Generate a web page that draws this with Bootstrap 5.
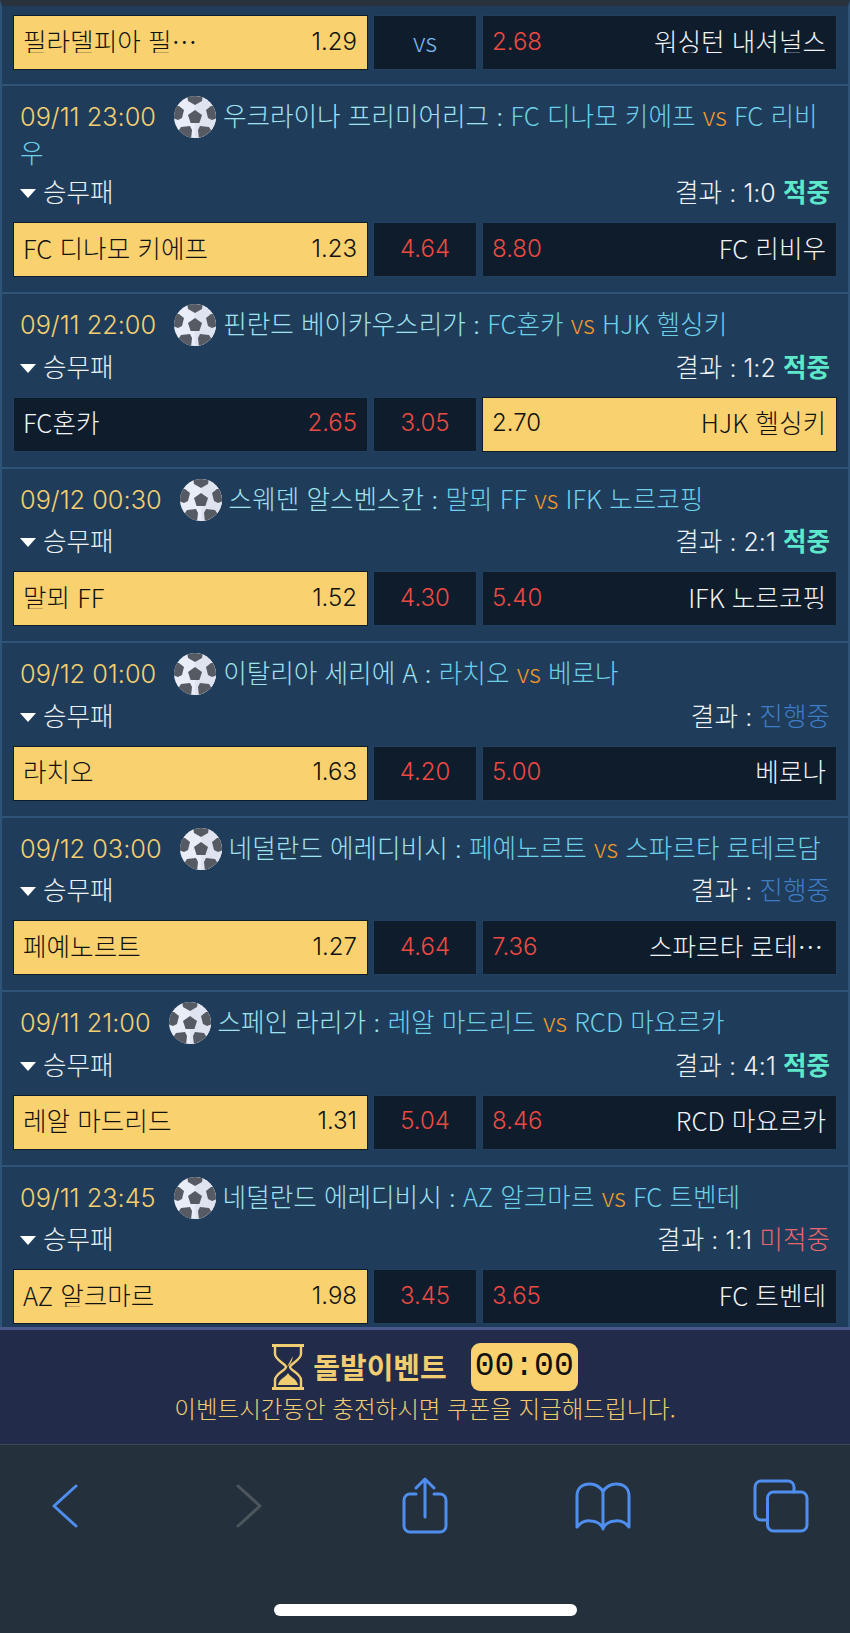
<!DOCTYPE html>
<html lang="ko">
<head>
    <meta charset="UTF-8">
    <meta name="viewport" content="width=device-width, initial-scale=1.0">
    <title>경기 결과</title>
    <link href="https://cdn.jsdelivr.net/npm/bootstrap@5.3.3/dist/css/bootstrap.min.css" rel="stylesheet">
    <style>
        html, body { height: 100%; }
        body {
            background: #24303c;
            font-family: "Noto Sans CJK KR", "Noto Sans", sans-serif;
            font-weight: 300;
            font-size: 25.6px;
            color: #eef2f5;
            overflow: hidden;
        }
        .screen { height: 1633px; }
        .game-list {
            min-height: 0;
            overflow: hidden;
            background: #1f3d5b;
            border-top: 6px solid #29323d;
            border-left: 2px solid #2f5478;
            border-right: 2px solid #2f5478;
        }
        .game { padding: 12px 11px 15px; border-bottom: 2px solid #2f5478; }
        .game-first { padding-top: 9px; padding-bottom: 14px; }
        .game-title { line-height: 33.5px; padding-left: 7px; padding-right: 5px; word-break: break-all; color: #6dd0e8; }
        .game-time { font-family: Inter, sans-serif; font-size: 25.3px; color: #f4cf70; margin-right: 18px; }
        .ball { width: 42px; height: 42px; vertical-align: middle; margin: -8px 7px -4px 0; }
        .league { color: #a0e2ee; }
        .vs-text { color: #f0982a; }
        .latin { font-family: Inter, sans-serif; font-size: 25px; }
        .game-sub { height: 34px; margin: 6px 7px 14px; line-height: 34px; }
        .tri { display: inline-block; border: 8px solid transparent; border-top: 9px solid #fff; border-bottom: 0; margin-right: 7px; vertical-align: 4px; }
        .odds-row { display: flex; gap: 5px; height: 55px; line-height: 1; }
        .pick {
            display: flex; align-items: center; justify-content: space-between;
            padding: 0 10px 4px 9px;
            background: #0e1c2c; border: 1px solid #21405f; min-width: 0; color: #f1f4f6;
        }
        .pick-side { flex: 1 1 0; }
        .pick-mid { flex: 0 0 104px; justify-content: center; padding-left: 0; padding-right: 0; }
        .pick.sel { background: #f9d26f; border-color: #0e1c2c; color: #111; }
        .odd { font-family: Inter, sans-serif; font-size: 24px; padding-top: 2px; }
        .red { color: #ec4a42; }
        .blue { color: #7ab8ee; }
        .team { max-width: 190px; overflow: hidden; white-space: nowrap; text-overflow: ellipsis; }
        .team-short { max-width: 177px; }
        .hit { color: #5ee8cb; font-weight: 700; }
        .ongoing { color: #3f7cc6; }
        .miss { color: #e9656d; }
        .event-bar { height: 117px; background: #232b4a; border-top: 3px solid #4a5a8c; color: #f1cd72; text-align: center; }
        .event-head { height: 48px; margin-top: 13px; gap: 9px; }
        .event-title { font-size: 29px; font-weight: 700; margin-right: 15px; }
        .clock { width: 107px; height: 48px; line-height: 48px; border-radius: 9px; background: #f9d26f; color: #111; font-family: "Liberation Mono", monospace; font-size: 33px; }
        .event-sub { font-size: 23.5px; line-height: 34px; }
        .toolbar { height: 189px; background: #24303c; border-top: 1px solid #3a4754; padding-top: 32px; }
        .tool-row { padding-left: 35px; height: 58px; gap: 118px; }
        .tool-row svg { width: 60px; height: 58px; fill: none; stroke: #4f8eee; stroke-width: 3; stroke-linecap: round; stroke-linejoin: round; }
        .tool-row svg.off { stroke: #4d555d; margin-left: 6px; }
        .tool-row svg.share { margin-left: -2px; }
        .home-bar { width: 303px; height: 12px; border-radius: 6px; background: #fff; margin: 69px auto 0; }
    </style>
</head>
<body>
    <svg width="0" height="0" class="position-absolute">
        <symbol id="ball" viewBox="0 0 42 42">
            <clipPath id="ball-clip"><circle cx="21" cy="21" r="21"/></clipPath>
            <circle cx="21" cy="21" r="21" fill="#e9edf7"/>
            <path d="M21 0a21 21 0 0 1 0 42z" fill="#dfe3f0"/>
            <g fill="#565a62" clip-path="url(#ball-clip)">
                <path d="M21 14l7 5-2.6 8h-8.8L14 19z"/>
                <path d="M13 -1h16l-1 6-7 4-7-4z"/>
                <path d="M-1 10h6l5 4-2 8-4 2-5-2z"/>
                <path d="M43 10h-6l-5 4 2 8 4 2 5-2z"/>
                <path d="M7 31l9-1 2 4-1 9H8l-5-6z"/>
                <path d="M35 31l-9-1-2 4 1 9h9l5-6z"/>
            </g>
        </symbol>
    </svg>
    <div class="screen d-flex flex-column">
        <div class="game-list flex-grow-1">
            <div class="game game-first">
                <div class="odds-row">
                    <div class="pick pick-side sel"><span class="team">필라델피아 필리스</span><span class="odd">1.29</span></div>
                    <div class="pick pick-mid blue">vs</div>
                    <div class="pick pick-side"><span class="odd red">2.68</span><span class="team">워싱턴 내셔널스</span></div>
                </div>
            </div>
            <div class="game">
                <div class="game-title"><span class="game-time">09/11 23:00</span><svg class="ball"><use href="#ball"/></svg><span class="league">우크라이나 프리미어리그 <span class="latin">:</span> </span>FC 디나모 키에프 <span class="vs-text">vs</span> FC 리비우</div>
                <div class="game-sub d-flex justify-content-between"><span><i class="tri"></i>승무패</span><span>결과 <span class="latin">: 1:0</span> <span class="hit">적중</span></span></div>
                <div class="odds-row">
                    <div class="pick pick-side sel"><span class="team">FC 디나모 키에프</span><span class="odd">1.23</span></div>
                    <div class="pick pick-mid odd red">4.64</div>
                    <div class="pick pick-side"><span class="odd red">8.80</span><span class="team">FC 리비우</span></div>
                </div>
            </div>
            <div class="game">
                <div class="game-title"><span class="game-time">09/11 22:00</span><svg class="ball"><use href="#ball"/></svg><span class="league">핀란드 베이카우스리가 <span class="latin">:</span> </span>FC혼카 <span class="vs-text">vs</span> HJK 헬싱키</div>
                <div class="game-sub d-flex justify-content-between"><span><i class="tri"></i>승무패</span><span>결과 <span class="latin">: 1:2</span> <span class="hit">적중</span></span></div>
                <div class="odds-row">
                    <div class="pick pick-side"><span class="team">FC혼카</span><span class="odd red">2.65</span></div>
                    <div class="pick pick-mid odd red">3.05</div>
                    <div class="pick pick-side sel"><span class="odd">2.70</span><span class="team">HJK 헬싱키</span></div>
                </div>
            </div>
            <div class="game">
                <div class="game-title"><span class="game-time">09/12 00:30</span><svg class="ball"><use href="#ball"/></svg><span class="league">스웨덴 알스벤스칸 <span class="latin">:</span> </span>말뫼 FF <span class="vs-text">vs</span> IFK 노르코핑</div>
                <div class="game-sub d-flex justify-content-between"><span><i class="tri"></i>승무패</span><span>결과 <span class="latin">: 2:1</span> <span class="hit">적중</span></span></div>
                <div class="odds-row">
                    <div class="pick pick-side sel"><span class="team">말뫼 FF</span><span class="odd">1.52</span></div>
                    <div class="pick pick-mid odd red">4.30</div>
                    <div class="pick pick-side"><span class="odd red">5.40</span><span class="team">IFK 노르코핑</span></div>
                </div>
            </div>
            <div class="game">
                <div class="game-title"><span class="game-time">09/12 01:00</span><svg class="ball"><use href="#ball"/></svg><span class="league">이탈리아 세리에 A <span class="latin">:</span> </span>라치오 <span class="vs-text">vs</span> 베로나</div>
                <div class="game-sub d-flex justify-content-between"><span><i class="tri"></i>승무패</span><span>결과 <span class="latin">:</span> <span class="ongoing">진행중</span></span></div>
                <div class="odds-row">
                    <div class="pick pick-side sel"><span class="team">라치오</span><span class="odd">1.63</span></div>
                    <div class="pick pick-mid odd red">4.20</div>
                    <div class="pick pick-side"><span class="odd red">5.00</span><span class="team">베로나</span></div>
                </div>
            </div>
            <div class="game">
                <div class="game-title"><span class="game-time">09/12 03:00</span><svg class="ball"><use href="#ball"/></svg><span class="league">네덜란드 에레디비시 <span class="latin">:</span> </span>페예노르트 <span class="vs-text">vs</span> 스파르타 로테르담</div>
                <div class="game-sub d-flex justify-content-between"><span><i class="tri"></i>승무패</span><span>결과 <span class="latin">:</span> <span class="ongoing">진행중</span></span></div>
                <div class="odds-row">
                    <div class="pick pick-side sel"><span class="team">페예노르트</span><span class="odd">1.27</span></div>
                    <div class="pick pick-mid odd red">4.64</div>
                    <div class="pick pick-side"><span class="odd red">7.36</span><span class="team team-short">스파르타 로테르담</span></div>
                </div>
            </div>
            <div class="game">
                <div class="game-title"><span class="game-time">09/11 21:00</span><svg class="ball"><use href="#ball"/></svg><span class="league">스페인 라리가 <span class="latin">:</span> </span>레알 마드리드 <span class="vs-text">vs</span> RCD 마요르카</div>
                <div class="game-sub d-flex justify-content-between"><span><i class="tri"></i>승무패</span><span>결과 <span class="latin">: 4:1</span> <span class="hit">적중</span></span></div>
                <div class="odds-row">
                    <div class="pick pick-side sel"><span class="team">레알 마드리드</span><span class="odd">1.31</span></div>
                    <div class="pick pick-mid odd red">5.04</div>
                    <div class="pick pick-side"><span class="odd red">8.46</span><span class="team">RCD 마요르카</span></div>
                </div>
            </div>
            <div class="game">
                <div class="game-title"><span class="game-time">09/11 23:45</span><svg class="ball"><use href="#ball"/></svg><span class="league">네덜란드 에레디비시 <span class="latin">:</span> </span>AZ 알크마르 <span class="vs-text">vs</span> FC 트벤테</div>
                <div class="game-sub d-flex justify-content-between"><span><i class="tri"></i>승무패</span><span>결과 <span class="latin">: 1:1</span> <span class="miss">미적중</span></span></div>
                <div class="odds-row">
                    <div class="pick pick-side sel"><span class="team">AZ 알크마르</span><span class="odd">1.98</span></div>
                    <div class="pick pick-mid odd red">3.45</div>
                    <div class="pick pick-side"><span class="odd red">3.65</span><span class="team">FC 트벤테</span></div>
                </div>
            </div>
        </div>
        <div class="event-bar flex-shrink-0">
            <div class="event-head d-flex justify-content-center align-items-center">
                <svg width="32" height="46" viewBox="0 0 32 46" fill="none">
                    <path d="M0 1.5h32M0 44.5h32" stroke="#f1cd72" stroke-width="3"/>
                    <path d="M3 3v7c0 6 11 10 11 13S3 30 3 36v7M29 3v7c0 6-11 10-11 13s11 7 11 13v7" stroke="#f1cd72" stroke-width="2.4"/>
                    <path d="M6 41c1-6 8-8 10-12 2 4 9 6 10 12zM15 23l1-2 5-9c-1 5-2 8-6 11z" fill="#f1cd72"/>
                </svg>
                <span class="event-title">돌발이벤트</span>
                <span class="clock">00:00</span>
            </div>
            <div class="event-sub">이벤트시간동안 충전하시면 쿠폰을 지급해드립니다.</div>
        </div>
        <div class="toolbar flex-shrink-0">
            <div class="tool-row d-flex">
                <svg viewBox="0 0 60 58"><path d="M41 9L19 29l22 20"/></svg>
                <svg class="off" viewBox="0 0 60 58"><path d="M19 9l22 20-22 20"/></svg>
                <svg class="share" viewBox="0 0 60 58"><path d="M21 17h-6a6 6 0 0 0-6 6v26a6 6 0 0 0 6 6h30a6 6 0 0 0 6-6V23a6 6 0 0 0-6-6h-6M30 40V2M21 11l9-9 9 9"/></svg>
                <svg viewBox="0 0 60 58"><path d="M30 15c-2-5-8-8-13-8-8 0-13 4-13 12v31c4-5 9-7 14-6 5 0 10 3 12 7 2-4 7-7 12-7 5-1 10 1 14 6V19c0-8-5-12-13-12-5 0-11 3-13 8zv37"/></svg>
                <svg viewBox="0 0 60 58"><path d="M16 43h-6a6 6 0 0 1-6-6V10a6 6 0 0 1 6-6h27a6 6 0 0 1 6 6v5"/><rect x="16.500" y="15" width="39.500" height="39" rx="6"/></svg>
            </div>
            <div class="home-bar"></div>
        </div>
    </div>
</body>
</html>
